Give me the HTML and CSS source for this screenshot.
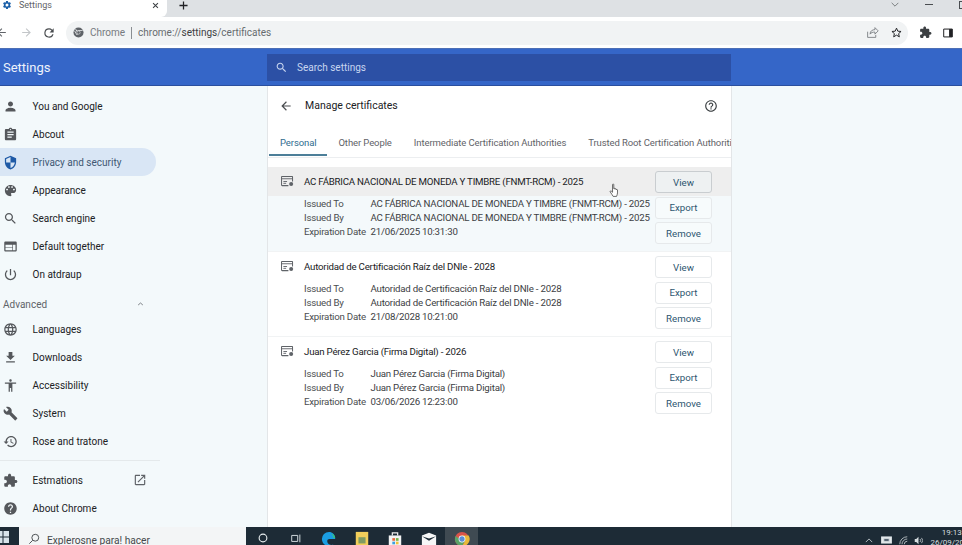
FILE: index.html
```html
<!DOCTYPE html>
<html lang="en">
<head>
<meta charset="utf-8">
<title>Settings</title>
<link rel="stylesheet" href="styles.css">
</head>
<body>
<svg class="defs" aria-hidden="true">
  <symbol id="cert" viewBox="0 0 14 12"><path fill="none" stroke="#5f6368" stroke-width="1.1" d="M8 10.5H1.2a.7.7 0 0 1-.7-.7V1.2a.7.7 0 0 1 .7-.7h10.6a.7.7 0 0 1 .7.7V6"/><path fill="none" stroke="#5f6368" d="M.5 3h12M2.500 6h4M2.500 8h3"/><circle cx="11" cy="8.800" r="2.200" fill="#5f6368"/></symbol>
  <symbol id="back" viewBox="0 0 24 24"><path d="M20 11H7.830l5.590-5.590L12 4l-8 8 8 8 1.410-1.410L7.830 13H20v-2z"/></symbol>
  <symbol id="puzzle" viewBox="0 0 24 24"><path d="M20.500 11H19V7c0-1.100-.9-2-2-2h-4V3.500C13 2.120 11.880 1 10.500 1S8 2.120 8 3.500V5H4c-1.100 0-1.990.9-1.990 2v3.800H3.500c1.490 0 2.700 1.210 2.700 2.700s-1.210 2.700-2.700 2.700H2V20c0 1.100.9 2 2 2h3.800v-1.500c0-1.490 1.210-2.700 2.700-2.700 1.490 0 2.700 1.210 2.700 2.700V22H17c1.100 0 2-.9 2-2v-4h1.500c1.380 0 2.500-1.120 2.500-2.500S21.880 11 20.500 11z"/></symbol>
  <symbol id="search" viewBox="0 0 24 24"><path d="M15.500 14h-.79l-.28-.27C15.410 12.590 16 11.110 16 9.500 16 5.910 13.090 3 9.500 3S3 5.910 3 9.500 5.910 16 9.500 16c1.610 0 3.090-.59 4.230-1.570l.27.28v.79l5 4.990L20.490 19l-4.990-5zm-6 0C7.010 14 5 11.990 5 9.500S7.010 5 9.500 5 14 7.010 14 9.500 11.990 14 9.500 14z"/></symbol>
</svg>

<div class="tabstrip">
  <div class="tab">
    <svg class="tab-gear" viewBox="0 0 24 24"><path d="M19.140 12.940c.04-.3.060-.61.060-.94 0-.32-.02-.64-.07-.94l2.030-1.580a.49.49 0 0 0 .12-.61l-1.920-3.320a.49.49 0 0 0-.59-.22l-2.390.96c-.5-.38-1.030-.7-1.620-.94l-.36-2.540a.48.48 0 0 0-.48-.41h-3.840a.48.48 0 0 0-.47.41l-.36 2.540c-.59.24-1.130.57-1.620.94l-2.390-.96a.48.48 0 0 0-.59.22L2.740 8.870c-.12.21-.08.47.12.61l2.030 1.580c-.05.3-.09.63-.09.94s.02.64.07.94l-2.030 1.580a.49.49 0 0 0-.12.61l1.920 3.320c.12.22.37.29.59.22l2.390-.96c.5.38 1.030.7 1.620.94l.36 2.540c.05.24.24.41.48.41h3.840c.24 0 .44-.17.47-.41l.36-2.540c.59-.24 1.130-.56 1.620-.94l2.390.96c.22.08.47 0 .59-.22l1.920-3.320c.12-.22.07-.47-.12-.61l-2.010-1.580zM12 15.600A3.600 3.600 0 1 1 12 8.400a3.600 3.600 0 0 1 0 7.200z"/></svg>
    <span class="tab-title">Settings</span>
    <svg class="tab-close" viewBox="0 0 10 10"><path d="M1.500 1.500l7 7M8.500 1.500l-7 7"/></svg>
  </div>
  <svg class="new-tab" viewBox="0 0 10 10"><path d="M5 .5v9M.5 5h9"/></svg>
  <div class="window-controls">
    <svg class="win-chevron" viewBox="0 0 12 7"><path d="M1 1l5 5 5-5"/></svg>
    <span class="win-min"></span>
    <span class="win-max"></span>
  </div>
</div>

<div class="toolbar">
  <svg class="nav-back" viewBox="0 0 24 24"><use href="#back"/></svg>
  <svg class="nav-forward" viewBox="0 0 24 24"><use href="#back"/></svg>
  <svg class="nav-reload" viewBox="0 0 24 24"><path d="M17.650 6.350A7.960 7.960 0 0 0 12 4a8 8 0 1 0 7.740 10h-2.080A6 6 0 1 1 12 6c1.660 0 3.140.69 4.220 1.780L13 11h7V4l-2.350 2.350z"/></svg>
  <div class="omnibox">
    <svg class="omni-chrome" viewBox="0 0 24 24"><circle cx="12" cy="12" r="11" fill="#5f6368"/><path fill="#f1f3f4" d="M12 7h9.500l-1 1.800H12A3.200 3.200 0 0 0 8.900 11L5 5.500 6.200 4.500 9.500 8A5 5 0 0 1 12 7zM7 13l-3-5.500-1 1.500 4.500 8 1.500.5L11.500 17A5 5 0 0 1 7 13z"/><circle cx="12" cy="12" r="3.600" fill="#5f6368" stroke="#f1f3f4" stroke-width="1.200"/></svg>
    <span class="omni-scheme">Chrome</span>
    <span class="omni-sep"></span>
    <span class="omni-url">chrome://<b>settings</b>/certificates</span>
    <svg class="omni-share" viewBox="0 0 16 16"><path d="M2 7v7h10v-3M5 10c0-4 3-5.500 6-5.500V2l4 4-4 4V7.500C8 7.500 6.500 8 5 10z"/></svg>
    <svg class="omni-star" viewBox="0 0 24 24"><path d="M12 4l2.400 5.500 6 .6-4.500 4 1.300 5.900-5.200-3.100L6.800 20l1.300-5.900-4.500-4 6-.6z"/></svg>
  </div>
  <svg class="tool-puzzle" viewBox="0 0 24 24"><use href="#puzzle"/></svg>
  <svg class="tool-panel" viewBox="0 0 14 14"><path fill="none" stroke="#202124" stroke-width="1.400" d="M1 1.500h12v11H1z"/><path fill="#202124" d="M8.500 1.500H13v11H8.500z"/></svg>
</div>

<header class="appbar">
  <div class="appbar-title">Settings</div>
  <div class="searchbox">
    <svg class="searchbox-icon" viewBox="0 0 24 24"><use href="#search"/></svg>
    <span>Search settings</span>
  </div>
</header>

<div class="main">
  <nav class="sidebar">
    <a class="nav-item"><svg viewBox="0 0 24 24"><path d="M12 12c2.210 0 4-1.790 4-4s-1.790-4-4-4-4 1.790-4 4 1.790 4 4 4zm0 2c-2.670 0-8 1.340-8 4v2h16v-2c0-2.660-5.330-4-8-4z"/></svg><span>You and Google</span></a>
    <a class="nav-item"><svg viewBox="0 0 24 24"><path d="M19 3h-4.180C14.400 1.840 13.300 1 12 1c-1.300 0-2.400.84-2.820 2H5c-1.100 0-2 .9-2 2v14c0 1.100.9 2 2 2h14c1.100 0 2-.9 2-2V5c0-1.100-.9-2-2-2zm-7 0c.55 0 1 .45 1 1s-.45 1-1 1-1-.45-1-1 .45-1 1-1zm2 14H7v-2h7v2zm3-4H7v-2h10v2zm0-4H7V7h10v2z"/></svg><span>Abcout</span></a>
    <a class="nav-item nav-item-active"><svg viewBox="0 0 24 24"><path d="M12 1L3 5v6c0 5.550 3.840 10.740 9 12 5.160-1.260 9-6.450 9-12V5l-9-4zm0 10.990h7c-.53 4.120-3.280 7.790-7 8.940V12H5V6.300l7-3.110v8.800z"/></svg><span>Privacy and security</span></a>
    <a class="nav-item"><svg viewBox="0 0 24 24"><path d="M12 3c-4.970 0-9 4.030-9 9s4.030 9 9 9c.83 0 1.500-.67 1.500-1.500 0-.39-.15-.74-.39-1.010-.23-.26-.38-.61-.38-.99 0-.83.67-1.500 1.500-1.500H16c2.760 0 5-2.240 5-5 0-4.420-4.030-8-9-8zm-5.500 9c-.83 0-1.500-.67-1.500-1.500S5.670 9 6.500 9 8 9.670 8 10.500 7.330 12 6.500 12zm3-4C8.670 8 8 7.330 8 6.500S8.670 5 9.500 5s1.500.67 1.500 1.500S10.330 8 9.500 8zm5 0c-.83 0-1.500-.67-1.500-1.500S13.670 5 14.500 5s1.500.67 1.500 1.500S15.330 8 14.500 8zm3 4c-.83 0-1.500-.67-1.500-1.500S16.670 9 17.500 9s1.500.67 1.500 1.500-.67 1.500-1.500 1.500z"/></svg><span>Appearance</span></a>
    <a class="nav-item"><svg viewBox="0 0 24 24"><use href="#search"/></svg><span>Search engine</span></a>
    <a class="nav-item"><svg viewBox="0 0 24 24"><path d="M20 4H4c-1.100 0-2 .9-2 2v12c0 1.100.9 2 2 2h16c1.100 0 2-.9 2-2V6c0-1.100-.9-2-2-2zm-5 14H4v-4h11v4zm0-5H4V9h11v4zm5 5h-4V9h4v9z"/></svg><span>Default together</span></a>
    <a class="nav-item"><svg viewBox="0 0 24 24"><path d="M13 3h-2v10h2V3zm4.830 2.170l-1.420 1.420C17.990 7.860 19 9.810 19 12c0 3.870-3.130 7-7 7s-7-3.130-7-7c0-2.190 1.010-4.140 2.580-5.420L6.170 5.170C4.230 6.820 3 9.260 3 12c0 4.970 4.030 9 9 9s9-4.030 9-9c0-2.740-1.230-5.180-3.170-6.830z"/></svg><span>On atdraup</span></a>
    <div class="nav-advanced"><span>Advanced</span><svg viewBox="0 0 10 6"><path d="M1.500 4.500L5 1.500l3.500 3"/></svg></div>
    <a class="nav-item"><svg viewBox="0 0 24 24"><path d="M11.990 2C6.470 2 2 6.480 2 12s4.470 10 9.990 10C17.520 22 22 17.520 22 12S17.520 2 11.990 2zm6.930 6h-2.950c-.32-1.250-.78-2.450-1.380-3.560 1.840.63 3.370 1.910 4.330 3.560zM12 4.040c.83 1.200 1.480 2.530 1.910 3.960h-3.820c.43-1.430 1.080-2.760 1.910-3.960zM4.260 14C4.100 13.360 4 12.690 4 12s.1-1.360.26-2h3.380c-.08.66-.14 1.320-.14 2 0 .68.060 1.340.14 2H4.260zm.82 2h2.950c.32 1.250.78 2.450 1.380 3.560-1.840-.63-3.370-1.900-4.330-3.560zm2.950-8H5.080c.96-1.660 2.490-2.930 4.330-3.560C8.810 5.550 8.350 6.750 8.030 8zM12 19.960c-.83-1.200-1.480-2.530-1.910-3.960h3.820c-.43 1.430-1.080 2.760-1.910 3.960zM14.340 14H9.660c-.09-.66-.16-1.320-.16-2 0-.68.070-1.350.16-2h4.680c.09.65.16 1.320.16 2 0 .68-.07 1.340-.16 2zm.25 5.560c.6-1.110 1.060-2.310 1.380-3.560h2.950c-.96 1.650-2.490 2.930-4.330 3.560zM16.360 14c.08-.66.14-1.320.14-2 0-.68-.06-1.340-.14-2h3.380c.16.64.26 1.310.26 2s-.1 1.360-.26 2h-3.380z"/></svg><span>Languages</span></a>
    <a class="nav-item"><svg viewBox="0 0 24 24"><path d="M19 9h-4V3H9v6H5l7 7 7-7zM5 18v2h14v-2H5z"/></svg><span>Downloads</span></a>
    <a class="nav-item"><svg viewBox="0 0 24 24"><path d="M12 2c1.100 0 2 .9 2 2s-.9 2-2 2-2-.9-2-2 .9-2 2-2zm9 7h-6v13h-2v-6h-2v6H9V9H3V7h18v2z"/></svg><span>Accessibility</span></a>
    <a class="nav-item"><svg viewBox="0 0 24 24"><path d="M22.700 19l-9.100-9.100c.9-2.300.4-5-1.500-6.900-2-2-5-2.400-7.400-1.300L9 6 6 9 1.600 4.700C.4 7.100.9 10.100 2.900 12.100c1.900 1.900 4.600 2.400 6.900 1.500l9.100 9.100c.4.4 1 .4 1.400 0l2.300-2.300c.5-.4.5-1.100.1-1.400z"/></svg><span>System</span></a>
    <a class="nav-item"><svg viewBox="0 0 24 24"><path d="M13 3c-4.970 0-9 4.030-9 9H1l3.890 3.890.07.14L9 12H6c0-3.870 3.130-7 7-7s7 3.130 7 7-3.130 7-7 7c-1.930 0-3.680-.79-4.940-2.060l-1.420 1.420C8.270 19.990 10.510 21 13 21c4.970 0 9-4.030 9-9s-4.030-9-9-9zm-1 5v5l4.280 2.540.72-1.210-3.500-2.080V8H12z"/></svg><span>Rose and tratone</span></a>
    <div class="nav-divider"></div>
    <a class="nav-item nav-item-ext"><svg viewBox="0 0 24 24"><use href="#puzzle"/></svg><span>Estmations</span><svg class="nav-open" viewBox="0 0 24 24"><path d="M19 19H5V5h7V3H5c-1.110 0-2 .9-2 2v14c0 1.100.89 2 2 2h14c1.100 0 2-.9 2-2v-7h-2v7zM14 3v2h3.590l-9.830 9.830 1.410 1.410L19 6.410V10h2V3h-7z"/></svg></a>
    <a class="nav-item"><svg viewBox="0 0 24 24"><path d="M12 2C6.480 2 2 6.480 2 12s4.480 10 10 10 10-4.480 10-10S17.520 2 12 2zm1 17h-2v-2h2v2zm2.070-7.750l-.9.92C13.450 12.900 13 13.500 13 15h-2v-.5c0-1.100.45-2.100 1.170-2.830l1.240-1.260c.37-.36.59-.86.59-1.410 0-1.100-.9-2-2-2s-2 .9-2 2H8c0-2.210 1.790-4 4-4s4 1.790 4 4c0 .88-.36 1.680-.93 2.250z"/></svg><span>About Chrome</span></a>
  </nav>

  <section class="panel">
    <div class="panel-head">
      <svg class="panel-back" viewBox="0 0 24 24"><use href="#back"/></svg>
      <h1>Manage certificates</h1>
      <svg class="panel-help" viewBox="0 0 24 24"><path d="M11 18h2v-2h-2v2zm1-16C6.480 2 2 6.480 2 12s4.480 10 10 10 10-4.480 10-10S17.520 2 12 2zm0 18c-4.410 0-8-3.590-8-8s3.590-8 8-8 8 3.590 8 8-3.590 8-8 8zm0-14c-2.210 0-4 1.790-4 4h2c0-1.100.9-2 2-2s2 .9 2 2c0 2-3 1.750-3 5h2c0-2.250 3-2.500 3-5 0-2.210-1.790-4-4-4z"/></svg>
    </div>
    <div class="tabs">
      <span class="tabs-item tabs-item-active">Personal</span>
      <span class="tabs-item">Other People</span>
      <span class="tabs-item">Intermediate Certification Authorities</span>
      <span class="tabs-item">Trusted Root Certification Authorities</span>
    </div>

    <article class="cert cert-hover">
      <div class="cert-body">
        <div class="cert-title"><svg viewBox="0 0 14 12"><use href="#cert"/></svg><span>AC FÁBRICA NACIONAL DE MONEDA Y TIMBRE (FNMT-RCM) - 2025</span></div>
        <dl class="cert-meta">
          <dt>Issued To</dt><dd>AC FÁBRICA NACIONAL DE MONEDA Y TIMBRE (FNMT-RCM) - 2025</dd>
          <dt>Issued By</dt><dd>AC FÁBRICA NACIONAL DE MONEDA Y TIMBRE (FNMT-RCM) - 2025</dd>
          <dt>Expiration Date</dt><dd>21/06/2025 10:31:30</dd>
        </dl>
      </div>
      <div class="cert-actions"><button class="btn btn-hover">View</button><button class="btn">Export</button><button class="btn">Remove</button></div>
      <svg class="cursor" viewBox="0 0 14 18"><path fill="#fff" stroke="#333" stroke-width=".9" stroke-linejoin="round" d="M4.500 1.500c0-1 1.600-1 1.600 0v5.300c.1-.8 1.500-.8 1.600 0v.6c.1-.8 1.500-.8 1.600 0v.7c.1-.7 1.400-.6 1.500.2v3.800c0 1.700-.7 3-1.200 4.400H5.300C4.500 15 2.800 12.700 1.600 10.800c-.6-1 .6-1.800 1.400-1l1.500 1.500z"/></svg>
    </article>
    <div class="cert-divider"></div>
    <article class="cert">
      <div class="cert-body">
        <div class="cert-title"><svg viewBox="0 0 14 12"><use href="#cert"/></svg><span>Autoridad de Certificación Raíz del DNIe - 2028</span></div>
        <dl class="cert-meta">
          <dt>Issued To</dt><dd>Autoridad de Certificación Raíz del DNIe - 2028</dd>
          <dt>Issued By</dt><dd>Autoridad de Certificación Raíz del DNIe - 2028</dd>
          <dt>Expiration Date</dt><dd>21/08/2028 10:21:00</dd>
        </dl>
      </div>
      <div class="cert-actions"><button class="btn">View</button><button class="btn">Export</button><button class="btn">Remove</button></div>
    </article>
    <div class="cert-divider"></div>
    <article class="cert">
      <div class="cert-body">
        <div class="cert-title"><svg viewBox="0 0 14 12"><use href="#cert"/></svg><span>Juan Pérez Garcia (Firma Digital) - 2026</span></div>
        <dl class="cert-meta">
          <dt>Issued To</dt><dd>Juan Pérez Garcia (Firma Digital)</dd>
          <dt>Issued By</dt><dd>Juan Pérez Garcia (Firma Digital)</dd>
          <dt>Expiration Date</dt><dd>03/06/2026 12:23:00</dd>
        </dl>
      </div>
      <div class="cert-actions"><button class="btn">View</button><button class="btn">Export</button><button class="btn">Remove</button></div>
    </article>
  </section>
</div>

<footer class="taskbar">
  <svg class="start" viewBox="0 0 12 12"><path d="M0 0h5.500v5.500H0zM6.500 0H12v5.500H6.500zM0 6.500h5.500V12H0zM6.500 6.500H12V12H6.500z"/></svg>
  <div class="task-search">
    <svg viewBox="0 0 14 14"><circle cx="8.500" cy="5.500" r="4"/><path d="M5.500 8.500L1.500 12.500"/></svg>
    <span>Explerosne para! hacer</span>
  </div>
  <div class="task-apps">
    <span class="app"><svg viewBox="0 0 14 14"><circle cx="7" cy="7" r="4.500" fill="none" stroke="#e8eef0" stroke-width="1.300"/></svg></span>
    <span class="app"><svg viewBox="0 0 14 14"><path fill="none" stroke="#d8dfe2" stroke-width="1.100" d="M2 4h7v7H2zM11.500 3v9"/></svg></span>
    <span class="app"><svg viewBox="0 0 18 18"><path fill="#1b9de2" d="M9 1a8 8 0 0 0-8 8c0 4.400 3.600 8 8 8 2 0 3.500-.6 5-1.700-3 1-7-.4-7-3.800 0-1.500 1-2.500 2.500-2.500h6.400C16.500 4.500 13 1 9 1z"/><path fill="#37c27a" d="M16 8c0-3-2-5-5-5 2.500 1 3 3 3 5z"/></svg></span>
    <span class="app"><svg viewBox="0 0 18 18"><path fill="#f2cf5b" d="M2 1h14v16H2z"/><path fill="#7f9b63" d="M5 7h8v7H5z"/></svg></span>
    <span class="app"><svg viewBox="0 0 18 18"><path fill="#f3f4f4" d="M2 5h14v12H2z"/><path fill="none" stroke="#eee" stroke-width="1.400" d="M6 5V2h6v3"/><path fill="#e8683c" d="M6 8h3v3H6z"/><path fill="#71b344" d="M10 8h3v3h-3z"/><path fill="#3ba0e0" d="M6 12h3v3H6z"/><path fill="#f0c13a" d="M10 12h3v3h-3z"/></svg></span>
    <span class="app"><svg viewBox="0 0 18 18"><path fill="#f6f7f7" d="M1 5l8-3 8 3v11H1z"/><path fill="#1d2b36" d="M1 6l8 5 8-5-8 2.500z"/></svg></span>
    <span class="app app-active"><svg viewBox="0 0 18 18"><circle cx="9" cy="9" r="8" fill="#d9534a"/><path fill="#e8b93a" d="M9 5h7.500A8 8 0 0 1 9 17l3.500-6z"/><path fill="#5aa469" d="M1.800 5.500A8 8 0 0 0 9 17l3.500-6H9z"/><circle cx="9" cy="9" r="3.800" fill="#fff"/><circle cx="9" cy="9" r="3" fill="#5b8dd6"/></svg></span>
  </div>
  <div class="tray">
    <svg class="tray-up" viewBox="0 0 10 6"><path d="M1 5l4-4 4 4"/></svg>
    <svg class="tray-batt" viewBox="0 0 12 9"><path d="M0 1h12v7H0z" fill="#e6ebed"/><path d="M3 3h6v3H3z" fill="#405060"/></svg>
    <svg class="tray-wifi" viewBox="0 0 12 12"><path d="M1 11a10 10 0 0 1 10-10M4 11a7 7 0 0 1 7-7M7 11a4 4 0 0 1 4-4"/></svg>
    <svg class="tray-vol" viewBox="0 0 12 12"><path fill="#d5dcdf" stroke="none" d="M1 4h2l3-3v10L3 8H1z"/><path d="M8 4a3 3 0 0 1 0 4M10 2.500a5 5 0 0 1 0 7"/></svg>
    <div class="clock"><span>19:13</span><span>26/09/2025</span></div>
  </div>
</footer>
</body>
</html>
```

FILE: styles.css
```css
* { box-sizing: border-box; }

html, body {
  margin: 0;
  height: 545px;
  overflow: hidden;
}

body {
  display: flex;
  flex-direction: column;
  width: 962px;
  font-family: Roboto, "Liberation Sans", sans-serif;
  font-size: 10.5px;
  color: #3c4043;
  background: #f3f9fb;
}

.defs { display: none; }

/* Tab strip */
.tabstrip {
  flex: 0 0 17px;
  display: flex;
  align-items: center;
  background: #dee1e4;
  overflow: hidden;
}

.tab {
  flex: 0 0 167px;
  height: 17px;
  display: flex;
  align-items: center;
  padding: 0 0 7px 2px;
  background: #fff;
  border-radius: 0 0 6px 0;
}

.tab-gear { width: 10px; height: 10px; fill: #1a5fa8; }
.tab-title { margin-left: 7px; color: #5f6368; font-size: 9px; flex: 1; }
.tab-close { width: 7px; height: 7px; margin-right: 8px; fill: none; stroke: #3c4043; stroke-width: 1.500; }
.new-tab { width: 9px; height: 9px; margin: -7px 0 0 12px; fill: none; stroke: #202124; stroke-width: 1.400; }

.window-controls { margin-left: auto; display: flex; align-items: center; margin-top: -8px; }
.win-chevron { width: 8px; height: 5px; fill: none; stroke: #4a4d50; stroke-width: 1; margin-right: 26px; }
.win-min { width: 8px; height: 1px; background: #4a4d50; margin-right: 26px; }
.win-max { width: 8px; height: 8px; border: 1px solid #4a4d50; margin-right: -5px; }

/* Toolbar */
.toolbar {
  flex: 0 0 31px;
  display: flex;
  align-items: center;
  background: #fff;
}

.toolbar svg { flex: none; }
.nav-back { width: 13px; height: 13px; margin-left: -5px; fill: #5f6368; }
.nav-forward { width: 13px; height: 13px; margin-left: 12px; fill: #c3c6c9; transform: scaleX(-1); }
.nav-reload { width: 14px; height: 14px; margin-left: 9px; fill: #4a4d50; }

.omnibox {
  width: 842px;
  height: 24px;
  margin-left: 10px;
  display: flex;
  align-items: center;
  padding-left: 7px;
  background: #f1f3f4;
  border-radius: 12px;
  color: #6b6f73;
  font-size: 10px;
}

.omni-chrome { width: 11px; height: 11px; }
.omni-scheme { margin-left: 6px; color: #767a7e; }
.omni-sep { width: 1px; height: 12px; margin: 0 6px; background: #8a8e92; }
.omni-url { flex: 1; color: #676b6f; }
.omni-url b { font-weight: 400; color: #3c4043; }
.omni-share { width: 13px; height: 13px; fill: none; stroke: #6f7377; stroke-width: 1; }
.omni-star { width: 13px; height: 13px; margin: 0 5px 0 11px; fill: none; stroke: #202124; stroke-width: 1.800; }
.tool-puzzle { width: 13px; height: 13px; margin-left: 11px; fill: #3c4043; }
.tool-panel { width: 10px; height: 10px; margin-left: 11px; }

/* Blue app bar */
.appbar {
  flex: 0 0 38px;
  display: flex;
  align-items: center;
  padding-left: 3px;
  background: #3566c8;
  border-top: 1px solid #4d6fb5;
  border-bottom: 1px solid #2b4f9e;
}

.appbar-title { flex: 0 0 264px; color: #eef3fc; font-size: 13px; }

.searchbox {
  width: 464px;
  height: 27px;
  display: flex;
  align-items: center;
  padding-left: 8px;
  background: #2c50a5;
  color: #c8d6f0;
  font-size: 10px;
}

.searchbox-icon { width: 13px; height: 13px; margin-right: 9px; fill: #c8d6f0; }

/* Main */
.main {
  flex: 1;
  display: flex;
  min-height: 0;
}

.sidebar {
  flex: 0 0 267px;
  padding-top: 6px;
}

.sidebar > * { width: 156px; }

.nav-item {
  height: 28px;
  display: flex;
  align-items: center;
  padding-left: 3px;
  color: #202124;
  font-size: 10px;
}

.nav-item svg { flex: none; width: 15px; height: 15px; margin-right: 14.500px; fill: #55585c; }

.nav-item-active {
  background: #d9e6f5;
  border-radius: 0 14px 14px 0;
  color: #3f5873;
}
.nav-item-active svg { fill: #1f5aa6; }

.nav-advanced {
  height: 22px;
  margin-top: 5px;
  display: flex;
  align-items: center;
  justify-content: space-between;
  padding: 0 12px 0 3px;
  color: #5f6368;
  font-size: 10px;
}
.nav-advanced svg { width: 7px; height: 4px; fill: none; stroke: #5f6368; stroke-width: 1.200; }

.nav-divider { width: 160px; height: 1px; margin: 5px 0; background: #e4e9eb; }

.nav-item .nav-open { width: 14px; height: 14px; margin: 0 9px 0 auto; fill: #5f6368; }

/* Panel */
.panel {
  width: 465px;
  background: #fff;
  border-left: 1px solid #e3e6e8;
  border-right: 1px solid #e3e6e8;
  overflow: hidden;
}

.panel-head {
  height: 39px;
  display: flex;
  align-items: center;
  padding: 0 13px 0 11px;
}
.panel-back { width: 14px; height: 14px; margin-right: 12px; fill: #4a4d50; }
.panel-head h1 { flex: 1; margin: 0; font-size: 10.5px; font-weight: 400; color: #202124; }
.panel-help { width: 14px; height: 14px; fill: #3c4043; }

.tabs {
  height: 33px;
  display: flex;
  align-items: center;
  white-space: nowrap;
  border-bottom: 1px solid #eceef0;
  padding: 3px 0 0 1px;
  margin-bottom: 9px;
}

.tabs-item {
  position: relative;
  padding: 0 11px;
  color: #5f6368;
  font-size: 9.500px;
  letter-spacing: -.1px;
}
.tabs-item-active { color: #2f6d8f; }
.tabs-item-active::after {
  content: "";
  position: absolute;
  left: 0;
  right: 0;
  bottom: -8px;
  height: 2px;
  background: #4d7f99;
}

.cert {
  position: relative;
  height: 84px;
  display: flex;
  justify-content: space-between;
  padding: 4px 19px 0 13px;
}

.cert-hover {
  background: linear-gradient(#eeeeee 0 29px, #f4f9fb 29px);
}

.cert-divider { height: 1px; background: #f1f3f4; }

.cert-body { font-size: 9.700px; letter-spacing: -.22px; }

.cert-title {
  height: 21px;
  display: flex;
  align-items: center;
  color: #202124;
}
.cert-title svg { width: 13px; height: 11px; margin-right: 10px; }

.cert-meta {
  display: grid;
  grid-template-columns: 66.500px auto;
  margin: 5px 0 0 23px;
  line-height: 14px;
  white-space: nowrap;
}
.cert-meta dt { color: #4a4d50; }
.cert-meta dd { margin: 0; color: #3c4043; }

.cert-actions {
  flex: none;
  display: flex;
  flex-direction: column;
  gap: 3.500px;
}

.btn {
  width: 57px;
  height: 22px;
  padding: 0;
  font: inherit;
  font-size: 9.700px;
  color: #2d5670;
  background: #fff;
  border: 1px solid #e6e9eb;
  border-radius: 3px;
}

.cert-hover .btn { background: #f7fbfc; }
.cert-hover .btn-hover { background: #eef1f2; border-color: #c9cdd0; }

.cursor {
  position: absolute;
  left: 341px;
  top: 16px;
  width: 11px;
  height: 15px;
}

/* Taskbar */
.taskbar {
  flex: 0 0 18px;
  display: flex;
  align-items: flex-start;
  background: #1d2b36;
  overflow: hidden;
}

.start { flex: none; width: 12px; height: 12px; margin: 4px 0 0 -3px; fill: #d7e3ea; }

.task-search {
  flex: 0 0 227px;
  height: 18px;
  margin-left: 10px;
  display: flex;
  align-items: flex-start;
  padding: 5px 0 0 9px;
  background: #f3f5f6;
  color: #45494c;
  font-size: 10.200px;
  line-height: 17px;
}
.task-search svg { width: 12px; height: 12px; margin: 1px 7px 0 0; fill: none; stroke: #45494c; stroke-width: 1.100; }

.task-apps { display: flex; }
.app {
  width: 33.200px;
  height: 18px;
  display: flex;
  justify-content: center;
  padding-top: 4px;
}
.app svg { width: 16px; height: 16px; }
.app:nth-child(1) svg, .app:nth-child(2) svg { width: 12px; height: 12px; margin-top: 1px; }
.app-active { background: #3f4a52; }

.tray {
  margin-left: auto;
  display: flex;
  align-items: flex-start;
  padding-top: 9px;
  margin-right: -11px;
}
.tray svg { flex: none; fill: none; stroke: #d5dcdf; stroke-width: 1; }
.tray-up { width: 8px; height: 5px; margin: 2px 8px 0 0; }
.tray-batt { width: 11px; height: 8px; margin-right: 7px; }
.tray-wifi { width: 9px; height: 9px; margin-right: 6px; }
.tray-vol { width: 9px; height: 9px; margin-right: 7px; }

.clock {
  display: flex;
  flex-direction: column;
  align-items: center;
  gap: 1px;
  margin-top: -8px;
  color: #d5dcdf;
  font-size: 8px;
  line-height: 9px;
}
```
